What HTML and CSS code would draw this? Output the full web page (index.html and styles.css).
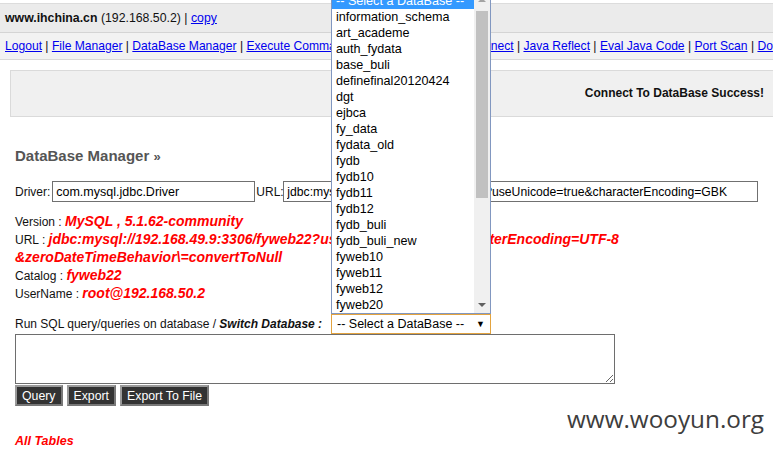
FILE: index.html
```html
<!DOCTYPE html>
<html>
<head>
<meta charset="utf-8">
<link rel="stylesheet" href="styles.css">
</head>
<body>
<div class="page">
  <div class="topbar">
    <div class="host"><b>www.ihchina.cn</b> (192.168.50.2) | <a href="#">copy</a></div>
  </div>
  <div class="nav">
    <a href="#">Logout</a> | <a href="#">File Manager</a> | <a href="#">DataBase Manager</a> | <a href="#">Execute Command</a> | <a href="#">Shell OnLine</a> | <a href="#">Back Connect</a> | <a href="#">Java Reflect</a> | <a href="#">Eval Java Code</a> | <a href="#">Port Scan</a> | <a href="#">Do</a>
  </div>
  <div class="msg">Connect To DataBase Success!</div>
  <div class="content">
    <h2 class="title">DataBase Manager <span class="raquo">»</span></h2>
    <div class="driver-row">
      <span class="lbl lbl-driver">Driver:</span><input class="in-driver" type="text" value="com.mysql.jdbc.Driver"><span class="lbl lbl-url">URL:</span><input class="in-url" type="text" value="jdbc:mysql://127.0.0.1:3306/fyweb22?useUnicode=true&amp;characterEncoding=GBK">
    </div>
    <div class="info">
      <div>Version : <b class="val">MySQL , 5.1.62-community</b></div>
      <div>URL : <b class="val">jdbc:mysql://192.168.49.9:3306/fyweb22?useUnicode=true&amp;characterEncoding=UTF-8<br>&amp;zeroDateTimeBehavior\=convertToNull</b></div>
      <div>Catalog : <b class="val">fyweb22</b></div>
      <div>UserName : <b class="val">root@192.168.50.2</b></div>
    </div>
    <div class="sql-row"><span class="sql-label">Run SQL query/queries on database / <b class="sw">Switch Database :</b></span><span class="selbox">-- Select a DataBase --<span class="arrow">▼</span></span></div>
    <textarea class="sql"></textarea>
    <div class="btns"><button class="btn">Query</button><button class="btn">Export</button><button class="btn">Export To File</button></div>
    <div class="tables">All Tables</div>
  </div>

  <div class="droplist">
    <div class="opts">
      <div class="opt sel">-- Select a DataBase --</div>
      <div class="opt">information_schema</div>
      <div class="opt">art_academe</div>
      <div class="opt">auth_fydata</div>
      <div class="opt">base_buli</div>
      <div class="opt">definefinal20120424</div>
      <div class="opt">dgt</div>
      <div class="opt">ejbca</div>
      <div class="opt">fy_data</div>
      <div class="opt">fydata_old</div>
      <div class="opt">fydb</div>
      <div class="opt">fydb10</div>
      <div class="opt">fydb11</div>
      <div class="opt">fydb12</div>
      <div class="opt">fydb_buli</div>
      <div class="opt">fydb_buli_new</div>
      <div class="opt">fyweb10</div>
      <div class="opt">fyweb11</div>
      <div class="opt">fyweb12</div>
      <div class="opt">fyweb20</div>
    </div>
    <div class="sbar">
      <span class="sb-up"></span>
      <span class="sb-thumb"></span>
      <span class="sb-down"></span>
    </div>
  </div>

  <div class="watermark">www.wooyun.org</div>
</div>
</body>
</html>
```

FILE: styles.css
```css
html, body {
  margin: 0;
  padding: 0;
  overflow: hidden;
  background: #fff;
}
body {
  font-family: "Liberation Sans", Arial, sans-serif;
  font-size: 12px;
  color: #111;
}
.page {
  position: relative;
  width: 773px;
  height: 449px;
  overflow: hidden;
}
a {
  color: #0000ee;
  text-decoration: underline;
}
.topbar {
  margin-top: 3px;
  height: 28px;
  background: #ebebeb;
  border-top: 1px solid #dcdcdc;
  border-bottom: 1px solid #d4d4d4;
  display: flex;
  align-items: center;
  padding-left: 5px;
  white-space: nowrap;
  font-size: 12.3px;
}
.nav {
  height: 26px;
  line-height: 26px;
  background: #f2f2f2;
  border-bottom: 1px solid #d8d8d8;
  padding-left: 5px;
  white-space: nowrap;
  overflow: hidden;
  font-size: 12.1px;
}
.msg {
  margin: 10px -20px 0 10px;
  height: 45px;
  line-height: 45px;
  background: #f0f0f0;
  border: 1px solid #dadada;
  text-align: right;
  padding-right: 28px;
  font-weight: bold;
}
.content {
  padding: 0 15px;
}
.title {
  margin: 26px 0 0 0;
  font-size: 15px;
  font-weight: bold;
  color: #555;
  line-height: 26px;
}
.raquo { font-size: 13px; }
.driver-row {
  margin-top: 11px;
  display: flex;
  align-items: center;
  white-space: nowrap;
}
.lbl-driver { width: 38px; }
.lbl-url { width: 27px; margin-left: 1px; }
input {
  font-family: "Liberation Sans", Arial, sans-serif;
  font-size: 12.5px;
  height: 21px;
  box-sizing: border-box;
  border: 1px solid #707070;
  padding: 0 3px;
  margin: 0;
  color: #000;
  background: #fff;
}
.in-driver { width: 207px; }
.in-url { width: 484px; font-size: 12.2px; }
.info {
  margin-top: 11px;
  line-height: 17px;
}
.val {
  color: #ff0000;
  font-style: italic;
  font-size: 14px;
}
.sql-row {
  margin-top: 11px;
  display: flex;
  align-items: center;
  white-space: nowrap;
  height: 20px;
}
.sql-label { width: 316px; }
.sw { font-style: italic; }
.selbox {
  position: relative;
  box-sizing: border-box;
  width: 160px;
  height: 20px;
  line-height: 18px;
  border: 1px solid #e3a33f;
  padding-left: 5px;
  color: #000;
  background: #fff;
  font-size: 12.5px;
}
.arrow {
  position: absolute;
  right: 5px;
  top: 0;
  font-size: 9px;
}
.sql {
  display: block;
  box-sizing: border-box;
  width: 600px;
  height: 50px;
  border: 1px solid #6e6e6e;
  margin: 0;
  padding: 2px;
  resize: both;
}
.btns {
  display: flex;
  gap: 4px;
  margin-top: 1px;
}
.btn {
  height: 21px;
  box-sizing: border-box;
  background: #333;
  color: #fff;
  font-family: "Liberation Sans", Arial, sans-serif;
  font-size: 12.3px;
  border: 2px solid #9a9a9a;
  border-right-color: #777;
  border-bottom-color: #777;
  padding: 0 5px;
  margin: 0;
}
.tables {
  margin-top: 28px;
  color: #ff0000;
  font-style: italic;
  font-weight: bold;
  font-size: 12.5px;
}
.droplist {
  position: absolute;
  left: 331px;
  top: -8px;
  width: 160px;
  height: 322px;
  box-sizing: border-box;
  border: 1px solid #8197c0;
  background: #fff;
  display: flex;
}
.opts {
  flex: 1;
  overflow: hidden;
}
.opt {
  height: 16px;
  line-height: 16px;
  padding-left: 4px;
  font-size: 12.6px;
  color: #000;
  white-space: nowrap;
}
.opt.sel {
  background: #3399ff;
  color: #fff;
}
.sbar {
  position: relative;
  width: 16px;
  background: #f0f0f0;
}
.sb-thumb {
  position: absolute;
  left: 2px;
  right: 2px;
  top: 18px;
  height: 187px;
  background: #c1c1c1;
}
.sb-up {
  position: absolute;
  left: 4px;
  top: 5px;
  width: 0; height: 0;
  border-left: 4px solid transparent;
  border-right: 4px solid transparent;
  border-bottom: 4px solid #a3a3a3;
}
.sb-down {
  position: absolute;
  left: 4px;
  bottom: 6px;
  width: 0; height: 0;
  border-left: 4px solid transparent;
  border-right: 4px solid transparent;
  border-top: 4px solid #606060;
}
.watermark {
  position: absolute;
  left: 567px;
  top: 402px;
  font-family: "Open Sans", "Noto Sans", sans-serif;
  font-size: 24.3px;
  color: #3d3d3d;
}
```
